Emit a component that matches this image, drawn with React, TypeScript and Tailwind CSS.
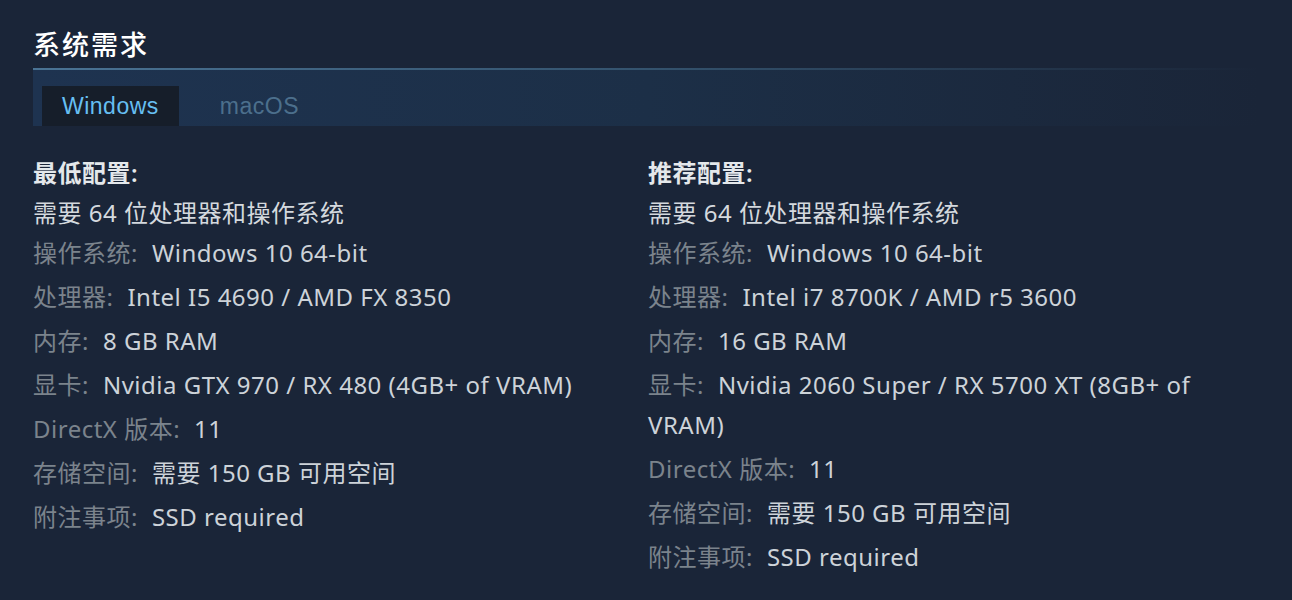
// App.tsx
// Steam 风格的系统需求面板。

type Spec = { label?: string; value: string };

const minimum: Spec[] = [
  { value: "需要 64 位处理器和操作系统" },
  { label: "操作系统:", value: "Windows 10 64-bit" },
  { label: "处理器:", value: "Intel I5 4690 / AMD FX 8350" },
  { label: "内存:", value: "8 GB RAM" },
  { label: "显卡:", value: "Nvidia GTX 970 / RX 480 (4GB+ of VRAM)" },
  { label: "DirectX 版本:", value: "11" },
  { label: "存储空间:", value: "需要 150 GB 可用空间" },
  { label: "附注事项:", value: "SSD required" },
];

const recommended: Spec[] = [
  { value: "需要 64 位处理器和操作系统" },
  { label: "操作系统:", value: "Windows 10 64-bit" },
  { label: "处理器:", value: "Intel i7 8700K / AMD r5 3600" },
  { label: "内存:", value: "16 GB RAM" },
  { label: "显卡:", value: "Nvidia 2060 Super / RX 5700 XT (8GB+ of VRAM)" },
  { label: "DirectX 版本:", value: "11" },
  { label: "存储空间:", value: "需要 150 GB 可用空间" },
  { label: "附注事项:", value: "SSD required" },
];

function SpecColumn({ title, items }: { title: string; items: Spec[] }) {
  return (
    <div>
      <div className="leading-[40px] text-[#e4e8eb] font-semibold">{title}</div>
      <ul role="list">
        {items.map((item, index) => (
          <li key={index} className={`leading-[40px] ${index === 0 ? "mb-0" : "mb-[4px]"}`}>
            {item.label ? (
              <>
                <span className="text-[#7b838c]">{item.label}</span>
                <span className="ml-[14px] text-[#cdd3d9]">{item.value}</span>
              </>
            ) : (
              <span className="text-[#d4d9de]">{item.value}</span>
            )}
          </li>
        ))}
      </ul>
    </div>
  );
}

export default function App() {
  return (
    <div className="min-h-[600px] w-[1292px] bg-[#1a2538] pt-[26px] px-[33px] font-['Noto_Sans','Noto_Sans_CJK_SC',sans-serif]">
      <h2 className="leading-[36px] text-[27px] tracking-[2px] text-white mb-[6px] font-medium font-['Noto_Sans_CJK_SC',sans-serif]">
        系统需求
      </h2>
      <div className="h-[2px] bg-gradient-to-r from-[#4a7394] via-[#34536e] to-transparent"></div>

      {/* 平台选项卡 */}
      <div className="h-[56px] flex items-end gap-[21px] pl-[9px] bg-gradient-to-r from-[#1e3350] via-[#1c2f47] to-[#1a2538] font-['Liberation_Sans',sans-serif] text-[23px] tracking-[0.5px]">
        <div className="h-[40px] px-[20px] flex items-center bg-[#161e2a] text-[#66bff2]">Windows</div>
        <div className="h-[40px] px-[20px] flex items-center text-[#4c6f8c]">macOS</div>
      </div>

      <div className="mt-[27px] grid grid-cols-[615px_1fr] text-[24px] tracking-[0.5px]">
        <SpecColumn title="最低配置:" items={minimum} />
        <SpecColumn title="推荐配置:" items={recommended} />
      </div>
    </div>
  );
}
